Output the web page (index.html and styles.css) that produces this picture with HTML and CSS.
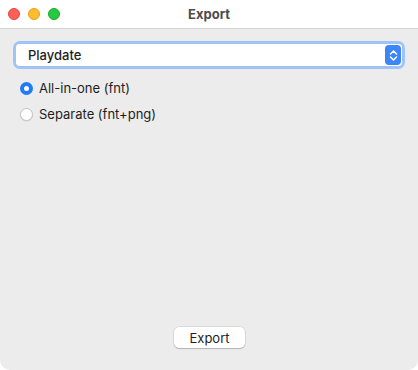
FILE: index.html
```html
<!DOCTYPE html>
<html lang="en">
<head>
  <meta charset="UTF-8">
  <title>Export</title>
  <link rel="stylesheet" href="styles.css">
</head>
<body>
  <div class="ventana">
    <div class="titulo">
      <div class="luces">
        <span class="luz roja"></span>
        <span class="luz ambar"></span>
        <span class="luz verde"></span>
      </div>
      <p>Export</p>
    </div>

    <div class="contenido">
      <div class="selector">
        <div class="caja">
          <span>Playdate</span>
          <span class="flechas">
            <svg width="9" height="13" viewBox="0 0 9 13">
              <path d="M1.5 5 L4.5 2 L7.5 5 M1.5 8 L4.5 11 L7.5 8" fill="none" stroke="white" stroke-width="1.5" stroke-linecap="round" stroke-linejoin="round"/>
            </svg>
          </span>
        </div>
      </div>

      <div class="opciones">
        <label class="opcion"><span class="radio activo"></span>All-in-one (fnt)</label>
        <label class="opcion"><span class="radio"></span>Separate (fnt+png)</label>
      </div>

      <div class="pie">
        <button type="button">Export</button>
      </div>
    </div>
  </div>
</body>
</html>
```

FILE: styles.css
```css
html, body {
  margin: 0;
  height: 100%;
}
body {
  font-family: Inter, "Liberation Sans", sans-serif;
  font-size: 13px;
  color: #1e1e1e;
  background: #ffffff;
}
.ventana {
  height: 370px;
  display: flex;
  flex-direction: column;
  background: #ececec;
  border-radius: 0 0 10px 10px;
  overflow: hidden;
}
.titulo {
  height: 28px;
  background: #ffffff;
  border-bottom: 1px solid #d4d4d4;
  position: relative;
  display: flex;
  align-items: center;
  justify-content: center;
  flex-shrink: 0;
}
.titulo p {
  margin: 0;
  font-weight: 700;
  font-size: 13px;
  color: #4c4c4c;
}
.luces {
  position: absolute;
  left: 8px;
  top: 8px;
  display: flex;
  gap: 8px;
}
.luz {
  width: 12px;
  height: 12px;
  border-radius: 50%;
  box-sizing: border-box;
}
.roja { background: #fe5f57; border: 0.5px solid #e2463f; }
.ambar { background: #febc2e; border: 0.5px solid #e1a116; }
.verde { background: #28c840; border: 0.5px solid #14ae2a; }

.contenido {
  flex: 1;
  display: flex;
  flex-direction: column;
  padding: 12px 16px 0 16px;
}
.selector {
  border: 3px solid #9fc3f6;
  border-radius: 7px;
  margin: 0 -3px;
}
.caja {
  height: 22px;
  background: #ffffff;
  border-radius: 4px;
  display: flex;
  align-items: center;
  justify-content: space-between;
  padding: 0 1px 0 12px;
  font-weight: 500;
}
.flechas {
  width: 16px;
  height: 20px;
  background: #3c86f7;
  border-radius: 4px;
  display: flex;
  align-items: center;
  justify-content: center;
}
.opciones {
  display: flex;
  flex-direction: column;
  gap: 10px;
  margin-top: 11px;
  padding-left: 4px;
}
.opcion {
  display: flex;
  align-items: center;
  gap: 6px;
  height: 16px;
}
.radio {
  width: 13px;
  height: 13px;
  border-radius: 50%;
  background: #ffffff;
  box-sizing: border-box;
  border: 0.5px solid #c4c4c4;
  box-shadow: 0 0.5px 1px rgba(0,0,0,0.12);
}
.radio.activo {
  border: 4px solid #1f7cf6;
  box-shadow: none;
  background: #ffffff;
}
.pie {
  margin-top: auto;
  display: flex;
  justify-content: center;
  padding-bottom: 22px;
}
.pie button {
  font-family: inherit;
  font-size: 13px;
  color: #1e1e1e;
  background: #ffffff;
  border: none;
  border-radius: 5px;
  width: 71px;
  height: 21px;
  padding: 0;
  box-shadow: 0 0 0 0.5px rgba(0,0,0,0.15), 0 1px 1px rgba(0,0,0,0.18);
  position: relative;
  left: 0.5px;
}
```
